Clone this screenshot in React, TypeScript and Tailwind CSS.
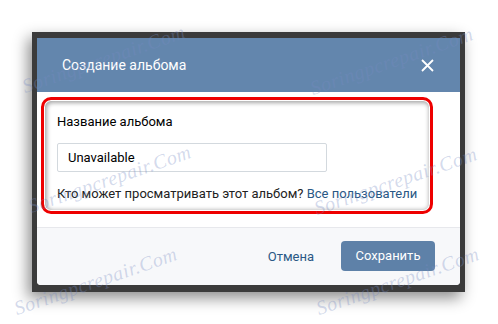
import React from "react";

const marks = [
  { left: 26, top: 76 },
  { left: 314, top: 78 },
  { left: 32, top: 196 },
  { left: 318, top: 198 },
  { left: 18, top: 298 },
  { left: 320, top: 298 },
];

function Watermark({ left, top }: { left: number; top: number }) {
  return (
    <div
      className="absolute pointer-events-none italic text-[20px] leading-none tracking-[0.5px] text-[rgba(120,140,195,0.32)] [font-family:'Liberation_Serif',serif] -rotate-[19deg] origin-bottom-left whitespace-nowrap"
      style={{ left, top }}
    >
      Soringpcrepair.Com
    </div>
  );
}

export default function App() {
  return (
    <div className="relative w-[498px] h-[324px] overflow-hidden bg-white pt-[32px] pl-[32px] [font-family:Roboto,'Liberation_Sans',sans-serif]">
      <div className="w-[433px] h-[260px] bg-[#3b3b3b] pt-[6px] pl-[5px] shadow-[-4px_6px_14px_rgba(0,0,0,0.45)]">
        <div className="w-[423px] h-[247px] flex flex-col rounded-b-[4px] overflow-hidden bg-white">
          {/* header */}
          <div className="h-[54px] bg-[#6386ad] flex items-center justify-between pl-[25px] pr-[25px]">
            <span className="text-white text-[14px] leading-none">Создание альбома</span>
            <svg width="13" height="13" viewBox="0 0 13 13" className="mr-[1px]">
              <path d="M1 1L12 12M12 1L1 12" stroke="white" strokeWidth="1.8" />
            </svg>
          </div>

          {/* body */}
          <div className="h-[135px] pt-[5px] pl-[4px]">
            <div className="w-[392px] h-[117px] rounded-[10px] border-[3px] border-[#ee0000] shadow-[inset_0_0_0_1px_#ffffff,inset_1px_1px_4px_2px_rgba(0,0,0,0.35)] pt-[14px] pl-[13px]">
              <div className="text-[13px] leading-[16px] font-normal text-[#000000]">Название альбома</div>
              <div className="mt-[13px] w-[270px] h-[29px] border border-[#d3d9de] rounded-[2px] flex items-center pl-[10px] text-[13px] text-[#000000]">
                Unavailable
              </div>
              <div className="mt-[14px] text-[13px] leading-[16px] text-[#222222]">
                Кто может просматривать этот альбом? <span className="text-[#2a5885]">Все пользователи</span>
              </div>
            </div>
          </div>

          {/* footer */}
          <div className="flex-1 bg-[#f7f8fa] border-t border-[#e7e8ec] flex items-center justify-end pr-[25px] gap-[27px]">
            <span className="text-[13px] text-[#2a5885]">Отмена</span>
            <button className="w-[94px] h-[30px] rounded-[4px] bg-[#5e81a8] text-white text-[13px] -mt-[2px]">
              Сохранить
            </button>
          </div>
        </div>
      </div>

      {marks.map((m, i) => (
        <Watermark key={i} left={m.left} top={m.top} />
      ))}
    </div>
  );
}
